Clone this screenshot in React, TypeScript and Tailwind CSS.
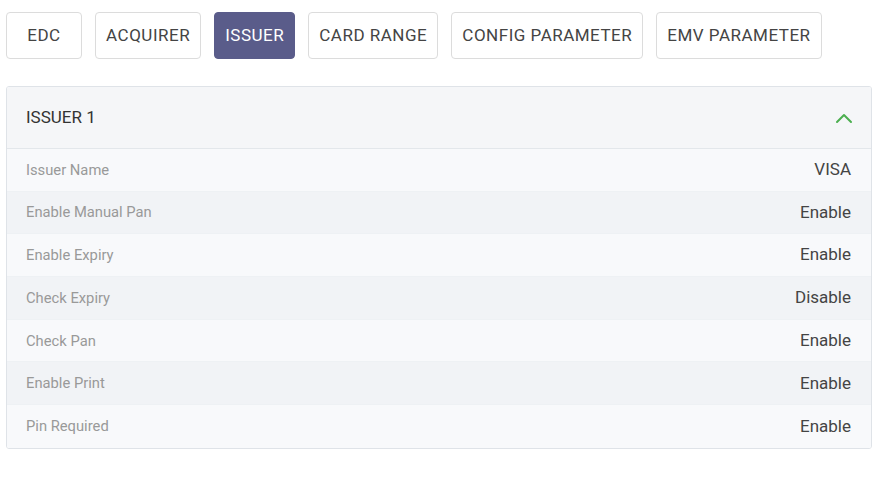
const tabs = ["EDC", "ACQUIRER", "ISSUER", "CARD RANGE", "CONFIG PARAMETER", "EMV PARAMETER"];

const rows: [string, string][] = [
  ["Issuer Name", "VISA"],
  ["Enable Manual Pan", "Enable"],
  ["Enable Expiry", "Enable"],
  ["Check Expiry", "Disable"],
  ["Check Pan", "Enable"],
  ["Enable Print", "Enable"],
  ["Pin Required", "Enable"],
];

export default function App() {
  return (
    <div className="min-h-[494px] w-[876px] bg-white" style={{ fontFamily: "Roboto, sans-serif" }}>
      <div className="flex gap-[13.1px] pl-[6px] pt-[12px]">
        {tabs.map((tab) => {
          const active = tab === "ISSUER";
          return (
            <button
              key={tab}
              type="button"
              className={
                active
                  ? "h-[47px] min-w-[76px] rounded-[4px] border border-[#5a5c8a] bg-[#5a5c8a] px-[10px] text-[17px] tracking-[0.5px] text-white"
                  : "h-[47px] min-w-[76px] rounded-[4px] border border-[#dcdcdc] bg-white px-[10px] text-[17px] tracking-[0.5px] text-[#444]"
              }
            >
              {tab}
            </button>
          );
        })}
      </div>

      <section className="mx-[6px] mt-[27px] w-[866px] overflow-hidden rounded-[3px] border border-[#dfe3e8]">
        <div className="flex h-[62px] items-center justify-between border-b border-[#e3e7eb] bg-[#f5f6f8] pl-[19px] pr-[18px]">
          <p className="text-[17px] text-[#333]">ISSUER 1</p>
          <svg width="18" height="12" viewBox="0 0 18 12" fill="none">
            <path d="M2 10 L9 3 L16 10" stroke="#4caf50" strokeWidth="2" strokeLinecap="round" strokeLinejoin="round" />
          </svg>
        </div>
        <div className="flex flex-col">
          {rows.map(([label, value], i) => (
            <div
              key={label}
              className={
                i % 2 === 0
                  ? "flex h-[42.7px] items-center justify-between border-b border-[#eef1f4] bg-[#f8f9fb] pl-[19px] pr-[20px] last:border-b-0"
                  : "flex h-[42.7px] items-center justify-between border-b border-[#eef1f4] bg-[#f1f3f6] pl-[19px] pr-[20px] last:border-b-0"
              }
            >
              <span className="text-[14.75px] text-[#999]">{label}</span>
              <span className="text-[17px] text-[#444]">{value}</span>
            </div>
          ))}
        </div>
      </section>
    </div>
  );
}
